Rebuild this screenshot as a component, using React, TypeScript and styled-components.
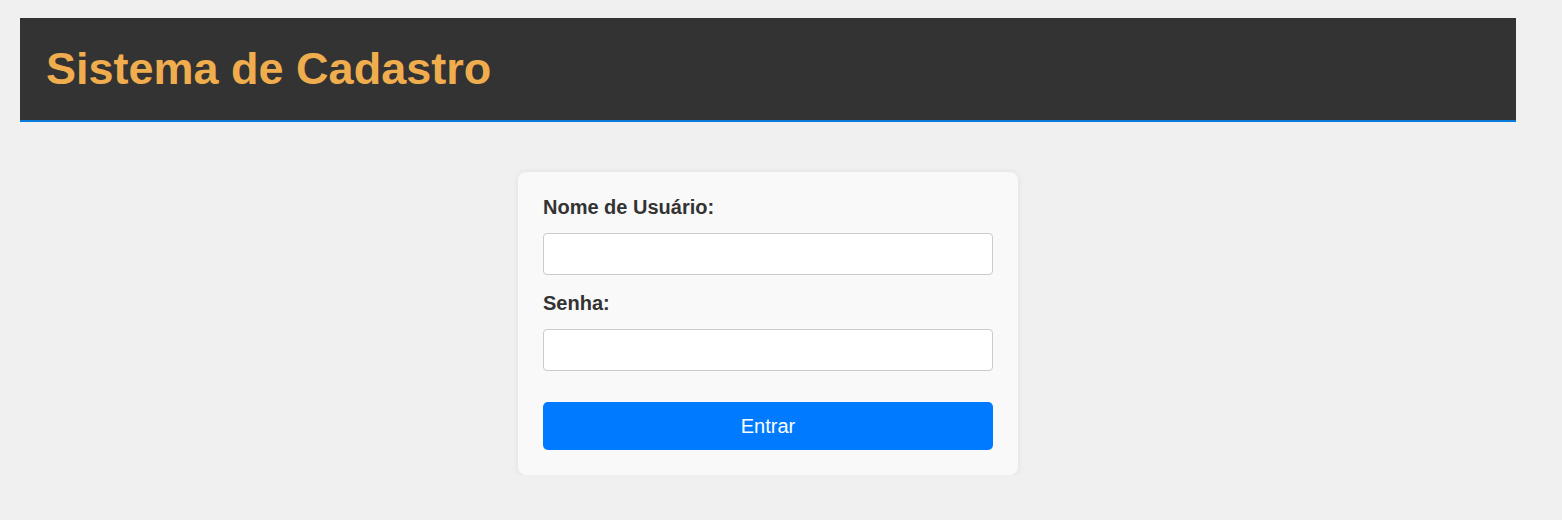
import React from "react";
import styled, { createGlobalStyle } from "styled-components";

const Global = createGlobalStyle`
  html, body { margin: 0; padding: 0; background: #f0f0f0; }
  body { font-family: "Liberation Sans", Arial, sans-serif; }
  * { box-sizing: border-box; }
`;

const Page = styled.div`
  width: 1496px;
  margin: 18px 0 0 20px;
  display: flex;
  flex-direction: column;
  align-items: center;
`;

const Header = styled.header`
  align-self: stretch;
  background: #333333;
  border-bottom: 2px solid #0a7ad8;
  height: 104px;
  padding: 0 26px;
  display: flex;
  align-items: center;
`;

const Title = styled.h1`
  margin: 0;
  color: #f0ad4e;
  font-size: 45px;
  font-weight: 700;
`;

const Card = styled.form`
  margin-top: 50px;
  width: 500px;
  background: #f9f9f9;
  border-radius: 8px;
  box-shadow: 0 0 6px rgba(0, 0, 0, 0.08);
  padding: 24px 25px 25px;
  display: flex;
  flex-direction: column;
`;

const Label = styled.label`
  font-size: 20px;
  line-height: 23px;
  font-weight: 700;
  color: #333;
  margin-bottom: 14px;
`;

const Input = styled.input<{ $last?: boolean }>`
  height: 42px;
  width: 100%;
  border: 1px solid #cccccc;
  border-radius: 4px;
  background: #fff;
  margin-bottom: ${(p) => (p.$last ? "31px" : "17px")};
  font-size: 16px;
  padding: 8px;
`;

const Button = styled.button`
  height: 48px;
  border: none;
  border-radius: 5px;
  background: #007bff;
  color: #fff;
  font-family: "Liberation Sans", Arial, sans-serif;
  font-size: 20px;
`;

export default function App() {
  return (
    <>
      <Global />
      <Page>
        <Header>
          <Title>Sistema de Cadastro</Title>
        </Header>
        <Card onSubmit={(e) => e.preventDefault()}>
          <Label>Nome de Usuário:</Label>
          <Input type="text" />
          <Label>Senha:</Label>
          <Input type="password" $last />
          <Button type="submit">Entrar</Button>
        </Card>
      </Page>
    </>
  );
}
